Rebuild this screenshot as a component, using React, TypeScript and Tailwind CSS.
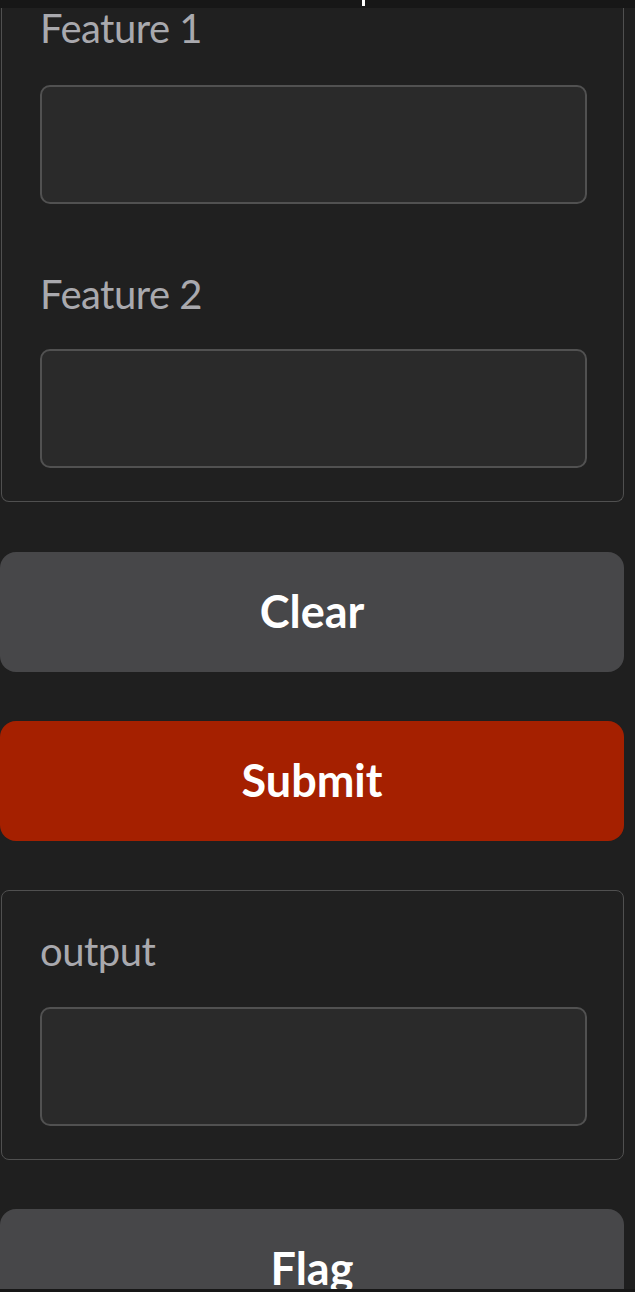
import React from "react";

function Field({ label, top }: { label: string; top: string }) {
  return (
    <div className={top}>
      <div className="h-[48px] leading-[48px] text-[40px] text-[#a9a9ae] tracking-[-0.5px]">{label}</div>
    </div>
  );
}

function TextBox({ className = "" }: { className?: string }) {
  return <div className={`h-[119px] w-[547px] rounded-[10px] border-2 border-[#515151] bg-[#2a2a2a] ${className}`} />;
}

function Button({ label, className = "", top }: { label: string; className?: string; top: string }) {
  return (
    <button
      className={`${top} flex h-[120px] w-[624px] items-center justify-center rounded-[16px] text-[45px] font-bold text-white ${className}`}
    >
      {label}
    </button>
  );
}

export default function App() {
  return (
    <div
      className="relative h-[1292px] w-full overflow-hidden bg-[#1f1f1f]"
      style={{ fontFamily: "Lato, 'Noto Sans', sans-serif" }}
    >
      {/* sticky header strip from above */}
      <div className="absolute left-0 top-0 z-10 h-[8px] w-full bg-[#171717]">
        <div className="absolute left-[362px] top-0 h-[6px] w-[3px] bg-white" />
      </div>

      <div className="ml-[1px] w-[623px] rounded-b-[8px] border-[1.5px] border-t-0 border-[#505050] bg-[#202020] pl-[38px] pt-[4px] pb-[33px]">
        <Field label="Feature 1" top="" />
        <TextBox className="mt-[33px]" />
        <Field label="Feature 2" top="mt-[66px]" />
        <TextBox className="mt-[31px]" />
      </div>

      <Button label="Clear" top="mt-[50px]" className="bg-[#474749]" />
      <Button label="Submit" top="mt-[49px]" className="bg-[#a52000]" />

      <div className="mt-[49px] ml-[1px] w-[623px] rounded-[8px] border-[1.5px] border-[#505050] bg-[#202020] pl-[38px] pt-[36px] pb-[33px]">
        <Field label="output" top="" />
        <TextBox className="mt-[32px]" />
      </div>

      <Button label="Flag" top="mt-[49px]" className="bg-[#474749]" />

      <div className="absolute bottom-0 left-0 h-[3px] w-full bg-[#171717]" />
    </div>
  );
}
